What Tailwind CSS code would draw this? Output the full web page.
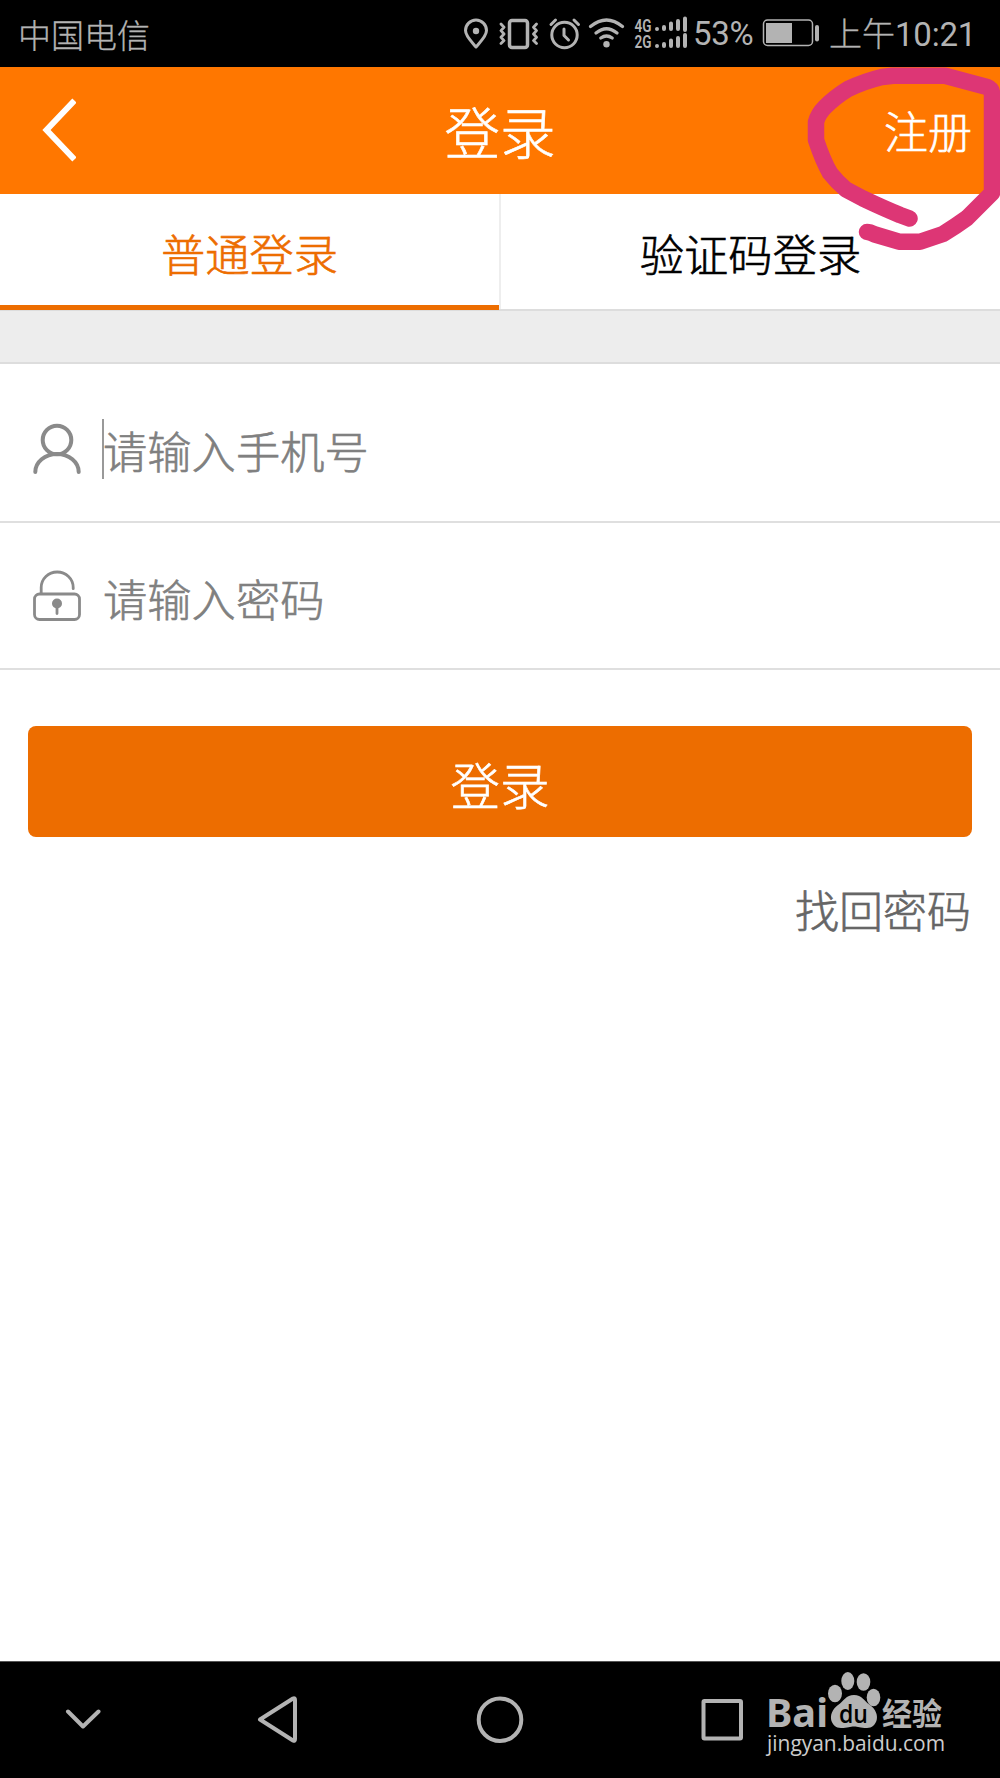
<!DOCTYPE html>
<html lang="zh-CN">
<head>
<meta charset="utf-8">
<title>登录</title>
<script src="https://cdn.jsdelivr.net/npm/@tailwindcss/browser@4"></script>
</head>
<body class="bg-white">
<div class="relative w-[1000px] h-[1778px] overflow-hidden flex flex-col bg-white font-['Noto_Sans_CJK_SC',sans-serif] font-light [-webkit-text-stroke:0.6px]">
  <!-- Status bar -->
  <div class="h-[67px] shrink-0 bg-black text-[#b3b3b3] flex items-center justify-between pl-[18px] pr-[24px] [-webkit-text-stroke:0.3px]">
    <span class="text-[33px] leading-[67px] pt-px">中国电信</span>
    <div class="flex items-center h-[67px]">
      <svg class="w-[232px] h-[67px]" viewBox="460 0 232 67" fill="none" stroke="#b3b3b3" stroke-width="3" stroke-linecap="round" stroke-linejoin="round">
        <path d="M476 47C471 41 465.500 36 465.500 30.500A10.500 10.500 0 0 1 486.500 30.500C486.500 36 481 41 476 47Z"/>
        <circle cx="476" cy="31" r="3.200" fill="#b3b3b3" stroke="none"/>
        <rect x="509.500" y="20.500" width="18" height="27" rx="2.500" stroke-width="3.500"/>
        <path d="M501 24l3 3.300-3 3.300 3 3.400-3 3.300 3 3.300-3 3M536.500 24l-3 3.300 3 3.300-3 3.400 3 3.300-3 3.300 3 3" stroke-width="2.800"/>
        <circle cx="564.500" cy="35" r="12.700"/>
        <path d="M564 29v6.500l4.500 4.500M551 24.500l4.500-4.500M574 20l4.500 4.500"/>
        <path d="M590.500 26.500q16-13 32 0M596 33q10.500-8.500 21 0M600.800 38q5.700-4 11.400 0" stroke-width="3.300"/>
        <circle cx="606.500" cy="44.200" r="3.200" fill="#b3b3b3" stroke="none"/>
        <g stroke-width="4">
          <path d="M657 29v0M664 27v2M671 23.500v5.500M678 21v8M685 18.500v11.500M657 46v0M664 44v2M671 40.500v5.500M678 38v8M685 35v11"/>
        </g>
        <g class="[-webkit-text-stroke:0]" fill="#b3b3b3" stroke="none" font-family="Roboto" font-weight="600" font-size="18.500">
          <text x="634.500" y="31.500" textLength="17" lengthAdjust="spacingAndGlyphs">4G</text>
          <text x="634.500" y="48" textLength="17" lengthAdjust="spacingAndGlyphs">2G</text>
        </g>
      </svg>
      <span class="w-[70px] pl-px font-['Roboto'] font-normal text-[33px] tracking-[-0.3px] [-webkit-text-stroke:0]">53%</span>
      <svg class="w-[67px] h-[67px]" viewBox="762 0 67 67" fill="none" stroke="#b3b3b3">
        <rect x="763.500" y="20" width="49" height="25.500" rx="4" stroke-width="1.500"/>
        <rect x="766" y="23" width="26" height="20" fill="#b3b3b3" stroke="none"/>
        <rect x="815" y="25" width="4" height="16.500" rx="2" fill="#b3b3b3" stroke="none"/>
      </svg>
      <span class="text-[33px] leading-[67px] pb-px whitespace-nowrap w-[147px]">上午<span class="font-['Roboto'] font-normal tracking-[-0.2px] [-webkit-text-stroke:0]">10:21</span></span>
    </div>
  </div>

  <!-- Title bar -->
  <header class="h-[127px] shrink-0 bg-[#ff7700] text-white grid grid-cols-[1fr_auto_1fr] items-center pl-[42px] pr-[28px]">
    <svg class="w-[34px] h-[64px] mb-px" viewBox="0 0 34 64" fill="none" stroke="#fff" stroke-width="6"><path d="M32.500 2.500 4.500 32l28 29.500"/></svg>
    <h1 class="text-[55.500px] pr-[14px] pb-px leading-[80px]">登录</h1>
    <a class="text-[44px] leading-[64px] pb-px justify-self-end">注册</a>
  </header>

  <!-- Tabs -->
  <nav class="h-[117px] shrink-0 flex text-[44.300px] leading-[116px] text-center border-b-2 border-[#dddddd]">
    <a class="w-[499px] h-[116px] text-[#ed6d00] border-b-[5px] border-[#ed6d00] pt-px">普通登录</a>
    <a class="grow text-black border-l-2 border-[#eeeeee] pt-px">验证码登录</a>
  </nav>
  <div class="h-[53px] shrink-0 bg-[#ededed] border-b-2 border-[#dddddd]"></div>

  <!-- Form -->
  <div class="h-[159px] shrink-0 flex items-center pl-[32px] border-b-2 border-[#dfdfdf] text-[#808080] text-[44.300px]">
    <svg class="w-[50px] h-[54px] mt-[12px]" viewBox="32 422 50 54" fill="none" stroke="#8a8a8a" stroke-width="4" stroke-linecap="round"><circle cx="57" cy="440" r="14.300"/><path d="M35.300 472a21.700 18 0 0 1 43.400 0"/></svg>
    <span class="ml-[20px] w-[2px] h-[60px] bg-[#999] mt-[13px]"></span>
    <span class="-ml-px leading-[64px] pt-[15px]">请输入手机号</span>
  </div>
  <div class="h-[147px] shrink-0 flex items-center pl-[32px] border-b-2 border-[#dfdfdf] text-[#808080] text-[44.300px]">
    <svg class="w-[50px] h-[54px]" viewBox="32 568.500 50 54" fill="none" stroke="#8a8a8a" stroke-width="2.800" stroke-linecap="round"><rect x="34.500" y="593.500" width="45" height="25.500" rx="5"/><path d="M41.200 593v-6a16 15.500 0 0 1 32 0v1.200M57 603v10"/><circle cx="57" cy="603" r="5" fill="#8a8a8a" stroke="none"/></svg>
    <span class="ml-[21px] leading-[64px] pt-[4px]">请输入密码</span>
  </div>
  <button class="mx-[28px] mt-[56px] h-[111px] shrink-0 rounded-lg bg-[#ed6d00] text-white text-[49.500px] leading-[111px] pt-[2px]">登录</button>
  <a class="mt-[40px] pr-[29px] text-right text-[44px] leading-[64px] text-[#666666] grow">找回密码</a>

  <!-- System navigation -->
  <footer class="h-[117px] shrink-0 bg-black border-t border-[#555]">
    <svg class="w-[1000px] h-[116px]" viewBox="0 1662 1000 116" fill="none" stroke="#b3b3b3" stroke-width="4" stroke-linecap="round" stroke-linejoin="round">
      <path d="M68 1711.500l15 15 15.500-15M260 1719.500l33-21q2-1 2 1.500v39q0 2.500-2 1.500Z"/>
      <circle cx="500" cy="1719.700" r="21.300"/>
      <rect x="703.500" y="1701" width="37.500" height="37.500" rx="1"/>
      <g class="[-webkit-text-stroke:0]" fill="#b3b3b3" stroke="none">
        <text x="766" y="1727" font-family="Noto Sans" font-weight="700" font-size="40" textLength="62" lengthAdjust="spacingAndGlyphs">Bai</text>
        <ellipse cx="835" cy="1693.500" rx="7" ry="8.800"/>
        <ellipse cx="847.800" cy="1681" rx="6.500" ry="9"/>
        <ellipse cx="863.500" cy="1682" rx="6.800" ry="8.800"/>
        <ellipse cx="873.500" cy="1697.500" rx="6.800" ry="8.800"/>
        <path d="M854 1695C862 1695 864 1701 870 1705C882 1714 877 1728 867 1728C860 1728 858 1726.500 854 1726.500C850 1726.500 848 1728 841 1728C831 1728 826 1714 838 1705C844 1701 846 1695 854 1695Z"/>
        <text x="839" y="1722.500" font-family="Open Sans" font-weight="600" font-size="25" fill="#000" textLength="29" lengthAdjust="spacingAndGlyphs">du</text>
        <text x="882" y="1724.500" font-family="Noto Sans CJK SC" font-weight="700" font-size="31" textLength="60" lengthAdjust="spacingAndGlyphs">经验</text>
        <text x="767" y="1750.500" font-family="Open Sans" font-weight="500" font-size="22" fill="#cccccc" textLength="178" lengthAdjust="spacingAndGlyphs">jingyan.baidu.com</text>
      </g>
    </svg>
  </footer>

  <!-- Hand-drawn highlight over the register link -->
  <svg class="absolute left-[800px] top-[60px] w-[200px] h-[200px]" viewBox="800 60 200 200" fill="none" stroke="#dd3675" stroke-width="16.500" stroke-linecap="round" stroke-linejoin="round">
    <path d="M909.500 218.500L900 215Q883 208 863 198.500L846 189.500Q837 182 830 173Q823 161 816 140V122Q818 114 825 107Q835 97 848 89Q865 81 882 77L893 75.700H945L987 87Q992 89 992 94V193L967 218Q956 226 943 234L920 241.700H899L875 234.500Q870 232 867 232"/>
  </svg>
</div>
</body>
</html>
